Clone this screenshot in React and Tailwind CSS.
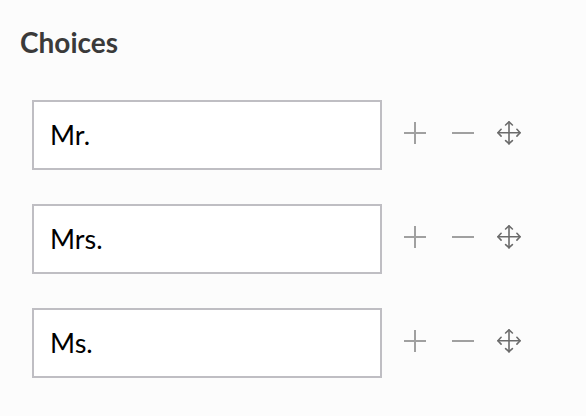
import { useState } from "react";

function PlusIcon() {
  return (
    <svg viewBox="0 0 24 24" className="size-6" fill="none" stroke="#a0a0a0" strokeWidth="2" aria-hidden="true">
      <path d="M12 1v22M1 12h22" />
    </svg>
  );
}

function MinusIcon() {
  return (
    <svg viewBox="0 0 24 24" className="size-6" fill="none" stroke="#a0a0a0" strokeWidth="2" aria-hidden="true">
      <path d="M1 12h22" />
    </svg>
  );
}

function MoveIcon() {
  return (
    <svg viewBox="0 0 24 24" className="size-6" fill="none" stroke="#6b6b6b" strokeWidth="1.6" strokeLinecap="round" strokeLinejoin="round" aria-hidden="true">
      <path d="M12 1v22M1 11.7h22" />
      <path d="M8.6 4L12 .9 15.4 4M8.6 19.6l3.4 3.1 3.4-3.1M4.1 8.3L.9 11.7l3.2 3.4M19.9 8.3l3.2 3.4-3.2 3.4" />
    </svg>
  );
}

function ChoiceRow({ value, index, onChange, onAdd, onRemove }) {
  return (
    <li className="flex items-center gap-[9px]">
      <input
        type="text"
        aria-label={`Choice ${index + 1}`}
        value={value}
        onChange={(e) => onChange(e.target.value)}
        className="h-[70px] min-w-0 flex-1 border-2 border-[#bfbec3] bg-white px-4 pb-0.5 text-[27px] text-black outline-none focus:border-[#8f8e94]"
      />
      <div className="flex pb-1">
        <button type="button" aria-label="Add choice" onClick={onAdd} className="flex size-12 items-center justify-center">
          <PlusIcon />
        </button>
        <button type="button" aria-label="Remove choice" onClick={onRemove} className="flex size-12 items-center justify-center">
          <MinusIcon />
        </button>
        <button type="button" aria-label="Move choice" className="flex h-12 w-11 cursor-move items-center justify-center">
          <MoveIcon />
        </button>
      </div>
    </li>
  );
}

export default function App() {
  const [choices, setChoices] = useState(["Mr.", "Mrs.", "Ms."]);

  return (
    <main className="min-h-screen bg-[#fcfcfc] py-[22px] pr-[55px] pl-5 font-['Lato','Liberation_Sans',sans-serif]">
      <section aria-labelledby="choices-title">
        <h2 id="choices-title" className="text-[28px] leading-10 font-bold text-[#3a3a3a]">
          Choices
        </h2>
        <ul className="mt-[38px] flex flex-col gap-[34px] pl-3">
          {choices.map((choice, i) => (
            <ChoiceRow
              key={i}
              index={i}
              value={choice}
              onChange={(v) => setChoices(choices.map((c, j) => (j === i ? v : c)))}
              onAdd={() => setChoices([...choices.slice(0, i + 1), "", ...choices.slice(i + 1)])}
              onRemove={() => setChoices(choices.filter((_, j) => j !== i))}
            />
          ))}
        </ul>
      </section>
    </main>
  );
}
